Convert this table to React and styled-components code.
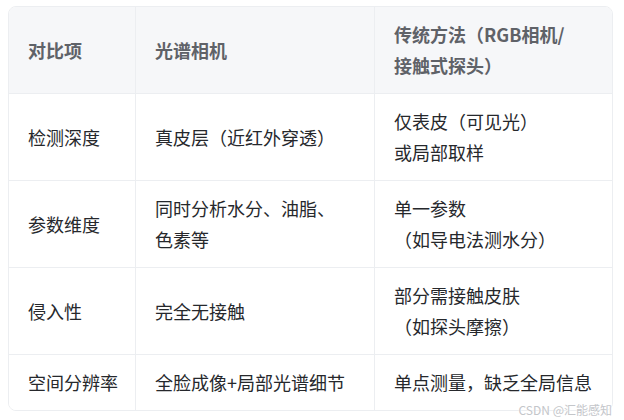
import React from 'react';
import styled, { createGlobalStyle } from 'styled-components';

const GlobalStyle = createGlobalStyle`
  html, body {
    margin: 0;
    padding: 0;
    background: #ffffff;
  }
  body {
    font-family: "Noto Sans CJK SC", "Noto Sans", sans-serif;
  }
`;

const Page = styled.div`
  position: relative;
  width: 624px;
  height: 420px;
  padding: 6px 10px 0 8px;
  box-sizing: border-box;
  overflow: hidden;
`;

const Table = styled.div`
  display: grid;
  grid-template-columns: 127px 239px 1fr;
  width: 605px;
  border: 1px solid #eceef1;
  border-radius: 8px;
  overflow: hidden;
  box-sizing: border-box;
`;

const Cell = styled.div`
  display: flex;
  align-items: center;
  padding: 12px 19px;
  min-height: 31px;
  font-size: 18px;
  line-height: 31px;
  color: ${p => (p.$head ? '#5f6268' : '#26282c')};
  font-weight: ${p => (p.$head ? 600 : 400)};
  background: ${p => (p.$head ? '#f6f7f9' : '#ffffff')};
  border-right: ${p => (p.$last ? 'none' : '1px solid #eceef1')};
  border-bottom: ${p => (p.$bottom ? 'none' : '1px solid #eceef1')};
  white-space: nowrap;
`;

const Watermark = styled.div`
  position: absolute;
  right: 12px;
  bottom: 2px;
  font-family: "Noto Sans CJK SC", "Noto Sans", sans-serif;
  font-size: 12px;
  line-height: 16px;
  color: #c4c6ca;
  text-shadow: 0 0 2px #ffffff, 0 0 2px #ffffff;
`;

const header = ['对比项', '光谱相机', ['传统方法（RGB相机/', '接触式探头）']];

const rows = [
  ['检测深度', '真皮层（近红外穿透）', ['仅表皮（可见光）', '或局部取样']],
  ['参数维度', ['同时分析水分、油脂、', '色素等'], ['单一参数', '（如导电法测水分）']],
  ['侵入性', '完全无接触', ['部分需接触皮肤', '（如探头摩擦）']],
  ['空间分辨率', '全脸成像+局部光谱细节', '单点测量，缺乏全局信息'],
];

const renderText = (t) =>
  Array.isArray(t)
    ? t.map((line, i) => (
        <React.Fragment key={i}>
          {line}
          {i < t.length - 1 && <br />}
        </React.Fragment>
      ))
    : t;

const App = () => {
  return (
    <>
      <GlobalStyle />
      <Page>
        <Table>
          {header.map((h, i) => (
            <Cell key={'h' + i} $head $last={i === 2}>
              <span>{renderText(h)}</span>
            </Cell>
          ))}
          {rows.map((row, r) =>
            row.map((c, i) => (
              <Cell key={r + '-' + i} $last={i === 2} $bottom={r === rows.length - 1}>
                <span>{renderText(c)}</span>
              </Cell>
            ))
          )}
        </Table>
        <Watermark>CSDN @汇能感知</Watermark>
      </Page>
    </>
  );
};

export default App;
